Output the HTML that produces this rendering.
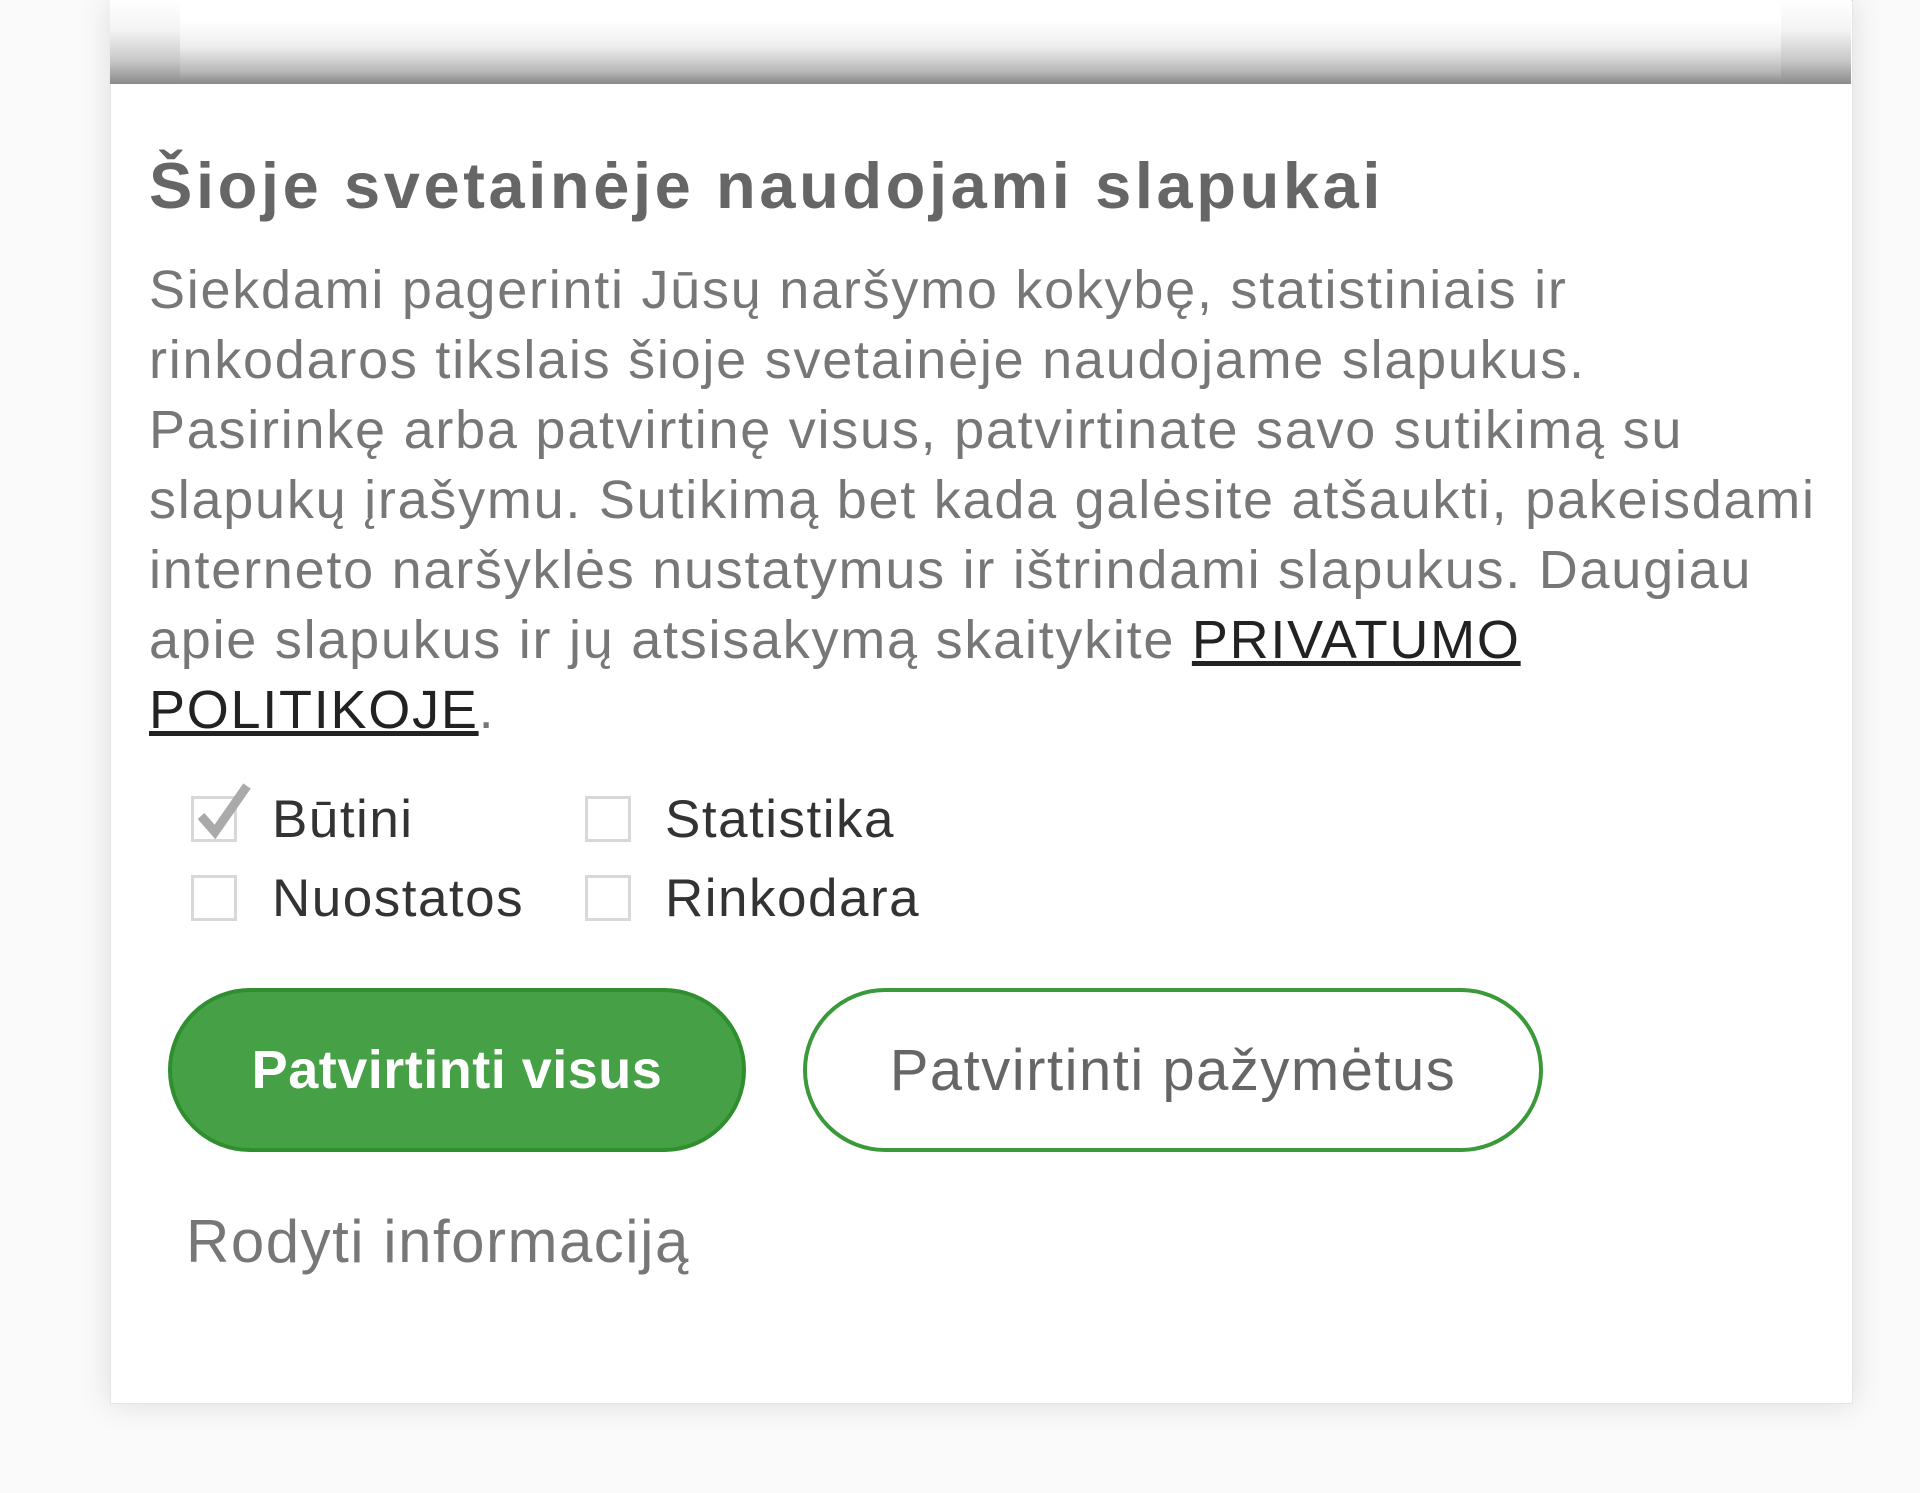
<!DOCTYPE html>
<html><head><meta charset="utf-8"><style>
html,body{margin:0;padding:0;width:1920px;height:1493px;background:#fafafa;overflow:hidden;font-family:"Liberation Sans",sans-serif;}
.card{position:absolute;left:110px;top:0;width:1741px;height:1402px;background:#fff;box-shadow:0 0 30px rgba(0,0,0,.12);border:1px solid #e4e4e4;}
.band{position:absolute;left:110px;top:0;width:1741px;height:84px;background:linear-gradient(#fff 0%,#f4f4f4 35%,#c8c8c8 72%,#8a8a8a 100%);}
.band:before{content:"";position:absolute;left:70px;right:70px;top:0;bottom:0;background:linear-gradient(#fff 25%,#eee 55%,#b8b8b8 85%,#888 100%);}
h1{position:absolute;left:149px;top:148px;margin:0;font-size:65px;font-weight:bold;color:#666;letter-spacing:3.6px;white-space:nowrap;}
.body{position:absolute;left:149px;top:255px;width:1720px;font-size:54px;line-height:70px;color:#777;letter-spacing:1.75px;white-space:nowrap;}
.body a{color:#222;text-decoration:underline;}
.cb{position:absolute;width:46px;height:46px;border:3px solid #d8d8d8;box-sizing:border-box;}
.lbl{position:absolute;font-size:53px;color:#333;line-height:60px;letter-spacing:1.5px;white-space:nowrap;}
.btn{position:absolute;box-sizing:border-box;border-radius:82px;display:flex;align-items:center;justify-content:center;white-space:nowrap;}
</style></head><body>
<div class="card"></div>
<div class="band"></div>
<h1>Šioje svetainėje naudojami slapukai</h1>
<div class="body">Siekdami pagerinti Jūsų naršymo kokybę, statistiniais ir<br>rinkodaros tikslais šioje svetainėje naudojame slapukus.<br>Pasirinkę arba patvirtinę visus, patvirtinate savo sutikimą su<br>slapukų įrašymu. Sutikimą bet kada galėsite atšaukti, pakeisdami<br>interneto naršyklės nustatymus ir ištrindami slapukus. Daugiau<br>apie slapukus ir jų atsisakymą skaitykite <a>PRIVATUMO<br>POLITIKOJE</a>.</div>
<div class="cb" style="left:191px;top:796px"></div>
<svg style="position:absolute;left:195px;top:780px" width="60" height="60" viewBox="0 0 60 60"><path d="M6 36 L20 52 L52 6" fill="none" stroke="#aaa" stroke-width="9"/></svg>
<div class="lbl" style="left:272px;top:790px">Būtini</div>
<div class="cb" style="left:585px;top:796px"></div>
<div class="lbl" style="left:665px;top:790px">Statistika</div>
<div class="cb" style="left:191px;top:875px"></div>
<div class="lbl" style="left:272px;top:869px">Nuostatos</div>
<div class="cb" style="left:585px;top:875px"></div>
<div class="lbl" style="left:665px;top:869px">Rinkodara</div>
<div class="btn" style="left:168px;top:988px;width:578px;height:164px;background:#45a046;border:4px solid #2f8f2f;color:#fff;font-weight:bold;font-size:54px;letter-spacing:0.5px;">Patvirtinti visus</div>
<div class="btn" style="left:803px;top:988px;width:740px;height:164px;background:#fff;border:4px solid #3a9a3a;color:#666;font-size:58px;letter-spacing:1.5px;">Patvirtinti pažymėtus</div>
<div class="lbl" style="left:186px;top:1212px;color:#777;font-size:60px;letter-spacing:1.5px;">Rodyti informaciją</div>
</body></html>
